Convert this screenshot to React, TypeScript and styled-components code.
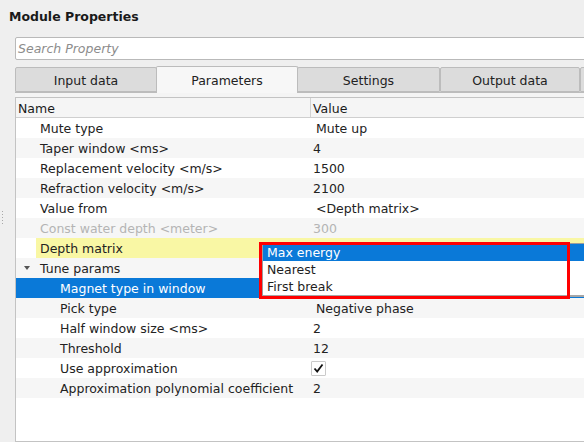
import React from "react";
import styled, { createGlobalStyle } from "styled-components";

const GlobalStyle = createGlobalStyle`
  html, body { margin: 0; padding: 0; background: #efefef; overflow: hidden; }
  body { font-family: "DejaVu Sans", "Noto Sans", sans-serif; font-size: 12.5px; color: #202020; }
  * { box-sizing: border-box; }
`;

const Window = styled.div`
  width: 584px;
  height: 442px;
  display: flex;
  flex-direction: column;
  overflow: hidden;
  background: #efefef;
`;

const Title = styled.div`
  flex: none;
  height: 37px;
  padding: 9px 0 0 9px;
  font-weight: bold;
  line-height: 15px;
  color: #1a1a1a;
`;

const Body = styled.div`
  flex: 1;
  display: flex;
  min-height: 0;
`;

const Splitter = styled.div`
  flex: none;
  width: 15px;
  padding: 174px 0 0 2px;
`;

const Handle = styled.div`
  width: 1px;
  height: 15px;
  background: repeating-linear-gradient(to bottom, #a8a8a8 0 1px, transparent 1px 3px);
`;

const Main = styled.div`
  flex: none;
  width: 620px;
  display: flex;
  flex-direction: column;
`;

const Search = styled.div`
  flex: none;
  height: 23px;
  background: #fff;
  border: 1px solid #b9b9b9;
  border-radius: 2px;
  padding-left: 2px;
  display: flex;
  align-items: center;
  font-style: italic;
  color: #8c8c8c;
`;

const TabBar = styled.div`
  flex: none;
  margin-top: 6px;
  height: 26px;
  display: flex;
  align-items: flex-end;
  position: relative;
  z-index: 1;
`;

const Tab = styled.div<{ $w: number; $active?: boolean }>`
  flex: none;
  width: ${(p) => p.$w}px;
  height: ${(p) => (p.$active ? 27 : 25)}px;
  margin-bottom: ${(p) => (p.$active ? -1 : 0)}px;
  margin-left: ${(p) => (p.$active ? -1 : 0)}px;
  margin-right: ${(p) => (p.$active ? -1 : 0)}px;
  background: ${(p) => (p.$active ? "#f7f7f7" : "#dcdcdc")};
  border: 1px solid #bcbcbc;
  border-bottom: ${(p) => (p.$active ? "none" : "1px solid #bcbcbc")};
  border-radius: 2px 2px 0 0;
  display: flex;
  align-items: center;
  justify-content: center;
  padding-top: 1px;
  color: #222;
  position: relative;
  z-index: ${(p) => (p.$active ? 2 : 1)};
`;

const Pane = styled.div`
  flex: 1;
  display: flex;
  flex-direction: column;
  background: #f4f4f4;
  border-top: 1px solid #bcbcbc;
  padding-top: 4px;
  min-height: 0;
`;

const Tree = styled.div`
  flex: 1;
  background: #fff;
  border: 1px solid #c3c3c3;
  display: flex;
  flex-direction: column;
`;

const Header = styled.div`
  flex: none;
  height: 20px;
  display: grid;
  grid-template-columns: 294px 1fr;
  background: #f5f5f5;
  border-bottom: 1px solid #cfcfcf;
`;

const HeaderCell = styled.div<{ $sep?: boolean }>`
  display: flex;
  align-items: center;
  padding-top: 1px;
  padding-left: 2px;
  border-left: ${(p) => (p.$sep ? "1px solid #d2d2d2" : "none")};
  color: #1a1a1a;
`;

const Rows = styled.div`
  position: relative;
  flex: 1;
`;

const Row = styled.div<{ $alt: boolean; $selected?: boolean }>`
  height: 20px;
  display: grid;
  grid-template-columns: 294px 1fr;
  background: ${(p) => (p.$selected ? "#0a79d8" : p.$alt ? "#f6f6f6" : "#fff")};
  color: ${(p) => (p.$selected ? "#fff" : "#222")};
`;

const NameCell = styled.div`
  display: flex;
  align-items: stretch;
  min-width: 0;
`;

const Indent = styled.div<{ $w: number }>`
  flex: none;
  width: ${(p) => p.$w}px;
  display: flex;
  align-items: center;
  justify-content: flex-end;
  padding-right: 6px;
`;

const Arrow = styled.span`
  width: 0;
  height: 0;
  border-left: 3.5px solid transparent;
  border-right: 3.5px solid transparent;
  border-top: 4px solid #555;
`;

const Label = styled.div<{ $hl?: boolean; $disabled?: boolean }>`
  flex: 1;
  display: flex;
  align-items: center;
  padding: 1px 0 0 4px;
  white-space: nowrap;
  background: ${(p) => (p.$hl ? "#f9f7a4" : "transparent")};
  color: ${(p) => (p.$disabled ? "#b4b4b4" : "inherit")};
`;

const ValueCell = styled.div<{ $pad: number; $hl?: boolean; $disabled?: boolean }>`
  display: flex;
  align-items: center;
  padding: 1px 0 0 ${(p) => p.$pad}px;
  white-space: nowrap;
  background: ${(p) => (p.$hl ? "#f9f7a4" : "transparent")};
  color: ${(p) => (p.$disabled ? "#b4b4b4" : "inherit")};
`;

const CheckBox = styled.div`
  width: 15px;
  height: 15px;
  border: 1px solid #cacaca;
  border-radius: 1px;
  background: #fff;
  display: flex;
  align-items: center;
  justify-content: center;
`;

const Popup = styled.div`
  position: absolute;
  top: 125px;
  left: 246px;
  width: 400px;
  background: #fff;
  border: 1px solid #9c9c9c;
  border-right: none;
  border-bottom: 2px solid #a6a6a6;
  z-index: 3;
`;

const PopupItem = styled.div<{ $active?: boolean }>`
  height: 17px;
  line-height: 17px;
  padding-left: 4px;
  background: ${(p) => (p.$active ? "#0a79d8" : "#fff")};
  color: ${(p) => (p.$active ? "#fff" : "#1e1e1e")};
`;

const Annotation = styled.div`
  position: absolute;
  top: 124px;
  left: 243px;
  width: 311px;
  height: 57px;
  border: 3px solid #ff0000;
  pointer-events: none;
  z-index: 4;
`;

type Item = {
  name: string;
  value?: string;
  depth: number;
  kind?: "combo" | "check" | "plain";
  branch?: boolean;
  hl?: boolean;
  selected?: boolean;
  disabled?: boolean;
};

const items: Item[] = [
  { name: "Mute type", value: "Mute up", depth: 0, kind: "combo" },
  { name: "Taper window <ms>", value: "4", depth: 0 },
  { name: "Replacement velocity <m/s>", value: "1500", depth: 0 },
  { name: "Refraction velocity <m/s>", value: "2100", depth: 0 },
  { name: "Value from", value: "<Depth matrix>", depth: 0, kind: "combo" },
  { name: "Const water depth <meter>", value: "300", depth: 0, disabled: true },
  { name: "Depth matrix", value: "", depth: 0, hl: true },
  { name: "Tune params", depth: 0, branch: true },
  { name: "Magnet type in window", value: "", depth: 1, selected: true },
  { name: "Pick type", value: "Negative phase", depth: 1, kind: "combo" },
  { name: "Half window size <ms>", value: "2", depth: 1 },
  { name: "Threshold", value: "12", depth: 1 },
  { name: "Use approximation", depth: 1, kind: "check" },
  { name: "Approximation polynomial coefficient", value: "2", depth: 1 },
];

const tabs = [
  { label: "Input data", w: 142 },
  { label: "Parameters", w: 142, active: true },
  { label: "Settings", w: 143 },
  { label: "Output data", w: 140 },
  { label: "", w: 140 },
];

export default function App() {
  return (
    <Window>
      <GlobalStyle />
      <Title>Module Properties</Title>
      <Body>
        <Splitter>
          <Handle />
        </Splitter>
        <Main>
          <Search>Search Property</Search>
          <TabBar>
            {tabs.map((t, i) => (
              <Tab key={i} $w={t.w} $active={t.active}>
                {t.label}
              </Tab>
            ))}
          </TabBar>
          <Pane>
            <Tree>
              <Header>
                <HeaderCell>Name</HeaderCell>
                <HeaderCell $sep>Value</HeaderCell>
              </Header>
              <Rows>
                {items.map((it, i) => (
                  <Row key={i} $alt={i % 2 === 1} $selected={it.selected}>
                    <NameCell>
                      <Indent $w={20 + it.depth * 20}>{it.branch && <Arrow />}</Indent>
                      <Label $hl={it.hl} $disabled={it.disabled}>
                        {it.name}
                      </Label>
                    </NameCell>
                    <ValueCell
                      $pad={it.kind === "combo" ? 6 : it.kind === "check" ? 1 : 3}
                      $hl={it.hl}
                      $disabled={it.disabled}
                    >
                      {it.kind === "check" ? (
                        <CheckBox>
                          <svg width="11" height="11" viewBox="0 0 11 11">
                            <path d="M1.5 5.5 L4.2 8.6 L9.5 1.5" fill="none" stroke="#111" strokeWidth="1.8" />
                          </svg>
                        </CheckBox>
                      ) : (
                        it.value
                      )}
                    </ValueCell>
                  </Row>
                ))}
                <Popup>
                  <PopupItem $active>Max energy</PopupItem>
                  <PopupItem>Nearest</PopupItem>
                  <PopupItem>First break</PopupItem>
                </Popup>
                <Annotation />
              </Rows>
            </Tree>
          </Pane>
        </Main>
      </Body>
    </Window>
  );
}
